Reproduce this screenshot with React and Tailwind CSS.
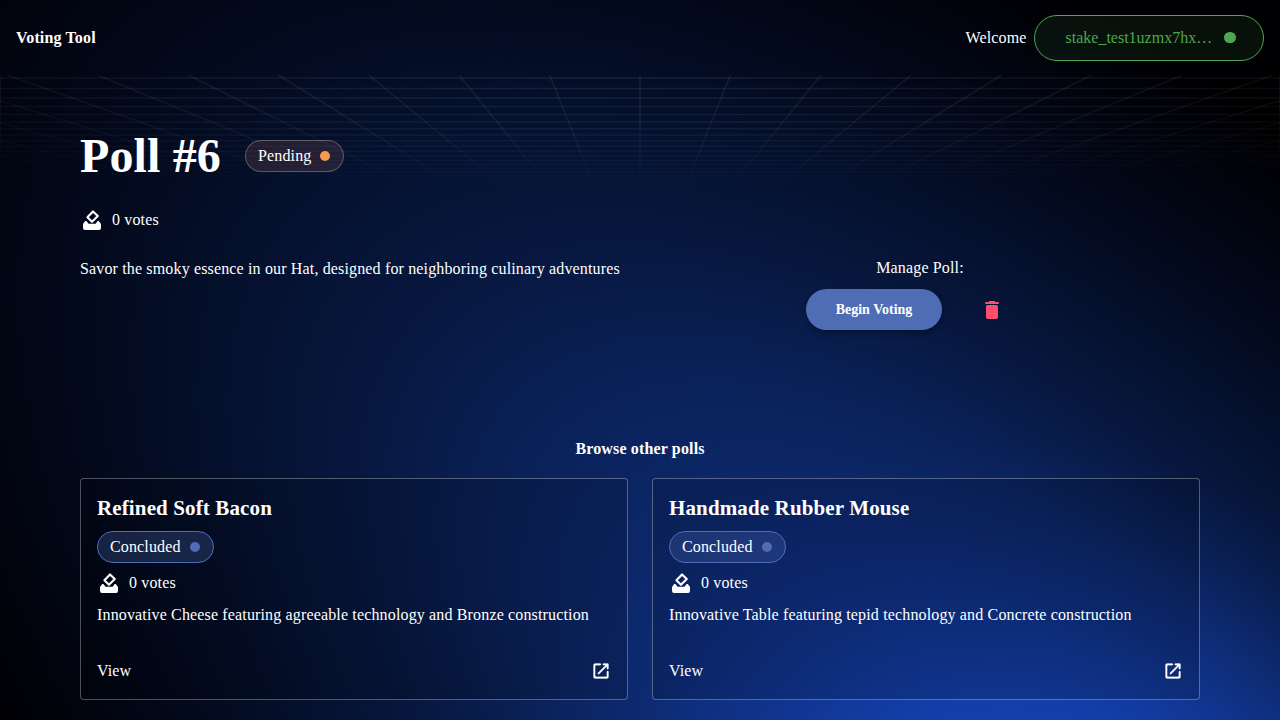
import React from "react";

const serif = "font-['Liberation_Serif',serif]";

function VoteIcon() {
  return (
    <svg className="size-6 shrink-0" viewBox="0 0 24 24">
      <path d="M13 3.4L17.8 8.1L12 13.8L7.4 9.2Z" fill="none" stroke="#fff" strokeWidth="2.1" strokeLinejoin="round" />
      <path d="M5.2 13h1.2L8.6 15.7h7l2-2.7h1.2L21 16V20a2 2 0 0 1-2 2H5a2 2 0 0 1-2-2v-4z" fill="#fff" />
    </svg>
  );
}

function LaunchIcon() {
  return (
    <svg className="size-5 fill-white stroke-white" strokeWidth="0.3" viewBox="0 0 24 24">
      <path d="M18 19H6c-.55 0-1-.45-1-1V6c0-.55.45-1 1-1h5c.55 0 1-.45 1-1s-.45-1-1-1H5c-1.11 0-2 .9-2 2v14c0 1.1.9 2 2 2h14c1.1 0 2-.9 2-2v-6c0-.55-.45-1-1-1s-1 .45-1 1v5c0 .55-.45 1-1 1zM14 4c0 .55.45 1 1 1h2.59l-9.13 9.13c-.39.39-.39 1.02 0 1.41.39.39 1.02.39 1.41 0L19 6.41V9c0 .55.45 1 1 1s1-.45 1-1V4c0-.55-.45-1-1-1h-5c-.55 0-1 .45-1 1z" />
    </svg>
  );
}

function DeleteIcon() {
  return (
    <svg className="size-6 fill-[#ff4d6d]" viewBox="0 0 24 24">
      <path d="M6 19c0 1.1.9 2 2 2h8c1.1 0 2-.9 2-2V9c0-1.1-.9-2-2-2H8c-1.1 0-2 .9-2 2v10zM18 4h-2.5l-.71-.71c-.18-.18-.44-.29-.7-.29H9.91c-.26 0-.52.11-.7.29L8.5 4H6c-.55 0-1 .45-1 1s.45 1 1 1h12c.55 0 1-.45 1-1s-.45-1-1-1z" />
    </svg>
  );
}

const rows = Array.from({ length: 26 }, (_, n) => 224.2 - 1 / (0.004521 + 0.000224 * n));
const rays = Array.from({ length: 41 }, (_, n) => (n - 20) * 90.4);

function Backdrop() {
  return (
    <svg className="absolute inset-0 h-[720px] w-[1280px]" viewBox="0 0 1280 720">
      <defs>
        <radialGradient id="glow" cx="0" cy="0" r="1" gradientUnits="userSpaceOnUse" gradientTransform="translate(1000 830) rotate(-139) scale(1430 720)">
          <stop offset="0" stopColor="#0f3084" />
          <stop offset="0.25" stopColor="#0d2a72" />
          <stop offset="0.4" stopColor="#0b235c" />
          <stop offset="0.55" stopColor="#07173e" />
          <stop offset="0.7" stopColor="#040e27" />
          <stop offset="0.84" stopColor="#020614" />
          <stop offset="1" stopColor="#000002" />
        </radialGradient>
        <radialGradient id="core" cx="0" cy="0" r="1" gradientUnits="userSpaceOnUse" gradientTransform="translate(1040 840) rotate(8) scale(540 390)">
          <stop offset="0" stopColor="#1a50dc" stopOpacity="0.85" />
          <stop offset="0.3" stopColor="#194ed4" stopOpacity="0.6" />
          <stop offset="0.6" stopColor="#174ac8" stopOpacity="0.25" />
          <stop offset="0.8" stopColor="#1646c0" stopOpacity="0.08" />
          <stop offset="1" stopColor="#1646c0" stopOpacity="0" />
        </radialGradient>
        <radialGradient id="fade" cx="0" cy="0" r="1" gradientUnits="userSpaceOnUse" gradientTransform="translate(640 0) scale(1150 118)">
          <stop offset="0" stopColor="#fff" />
          <stop offset="0.4" stopColor="#fff" stopOpacity="0.85" />
          <stop offset="1" stopColor="#fff" stopOpacity="0" />
        </radialGradient>
        <mask id="gridMask" maskUnits="userSpaceOnUse" x="0" y="0" width="1280" height="130">
          <rect width="1280" height="130" fill="url(#fade)" />
        </mask>
      </defs>
      <rect width="1280" height="720" fill="#000002" />
      <rect width="1280" height="720" fill="url(#glow)" />
      <rect width="1280" height="720" fill="url(#core)" />
      <g transform="translate(0 75)">
        <g mask="url(#gridMask)" stroke="#fff" strokeOpacity="0.075" fill="none">
          {rows.map((y) => (
            <path key={y} d={`M0 ${y}H1280`} strokeWidth="1.4" />
          ))}
          {rays.map((x) => (
            <path key={x} d={`M${640 + x} 0L${640 + x * 0.4} 134.4`} strokeWidth="1.5" />
          ))}
          <path d="M0.5 0V130M1279.5 0V130" />
        </g>
      </g>
    </svg>
  );
}

function Votes() {
  return (
    <div className="flex items-center gap-2">
      <VoteIcon />
      <span>0 votes</span>
    </div>
  );
}

function PollCard({ title, text }) {
  return (
    <div className="flex h-[222px] flex-col rounded border border-white/30 bg-black/15 px-4 pt-4">
      <h2 className="text-[21px] leading-[26px] font-bold tracking-[0.13px]">{title}</h2>
      <div className="mt-2.5 flex h-8 w-[117px] items-center gap-[9px] rounded-full border border-[#4e6db5] bg-[#4e6db5]/28 pl-3">
        <span>Concluded</span>
        <span className="size-2.5 rounded-full bg-[#4e6db5]" />
      </div>
      <div className="mt-2">
        <Votes />
      </div>
      <p className="mt-2">{text}</p>
      <div className="mt-8 flex items-center justify-between">
        <span>View</span>
        <LaunchIcon />
      </div>
    </div>
  );
}

export default function App() {
  return (
    <div className={`relative h-[720px] w-[1280px] overflow-hidden bg-black text-base leading-6 tracking-[0.15px] text-white ${serif}`}>
      <Backdrop />
      <div className="relative">
        <header className="flex h-[75px] items-center justify-between px-4">
          <span className="font-bold">Voting Tool</span>
          <div className="flex items-center gap-[7.5px]">
            <span>Welcome</span>
            <div className="flex h-[46px] w-[230px] items-center gap-3 rounded-full border border-[#4fa650] bg-[#4fa650]/10 pl-[30.5px] tracking-normal text-[#4fa650]">
              <span>stake_test1uzmx7hx…</span>
              <span className="size-[11.6px] rounded-full bg-[#4fa650]" />
            </div>
          </div>
        </header>
        <main className="px-20 pt-[53px]">
          <div className="flex h-14 items-center gap-6">
            <h1 className="text-[48px] leading-[56px] font-bold tracking-[0.14px]">Poll #6</h1>
            <div className="flex h-8 w-[99px] items-center gap-[9px] rounded-full border border-white/25 bg-[#ff9880]/12 pl-3">
              <span>Pending</span>
              <span className="size-2.5 rounded-full bg-[#f9984f]" />
            </div>
          </div>
          <div className="mt-6">
            <Votes />
          </div>
          <div className="mt-6 grid h-[181px] grid-cols-2 items-start">
            <p className="pt-px">Savor the smoky essence in our Hat, designed for neighboring culinary adventures</p>
            <div className="flex w-[560px] flex-col items-center">
              <p>Manage Poll:</p>
              <div className="mt-[9px] flex items-center gap-[38px] pr-[31px]">
                <button className="h-[41px] w-[136px] rounded-full bg-[#4e6db5] pl-px text-sm font-bold tracking-normal shadow-md shadow-black/25">Begin Voting</button>
                <DeleteIcon />
              </div>
            </div>
          </div>
          <h3 className="text-center font-bold">Browse other polls</h3>
          <div className="mt-[17px] grid grid-cols-2 gap-6">
            <PollCard title="Refined Soft Bacon" text="Innovative Cheese featuring agreeable technology and Bronze construction" />
            <PollCard title="Handmade Rubber Mouse" text="Innovative Table featuring tepid technology and Concrete construction" />
          </div>
        </main>
      </div>
    </div>
  );
}
